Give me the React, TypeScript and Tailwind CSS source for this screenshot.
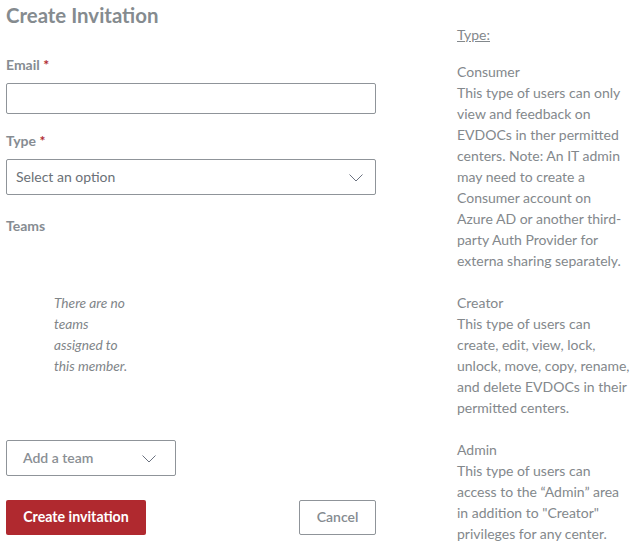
function Chevron({ className }: { className: string }) {
  return (
    <svg className={className} width="14" height="8" viewBox="0 0 14 8" fill="none">
      <path d="M.5 .5l6.5 6.5 6.5-6.5" stroke="#6b7280" strokeWidth="1" />
    </svg>
  )
}

function Label({ text, required = false }: { text: string; required?: boolean }) {
  return (
    <div className="text-[14px] leading-[20px] font-bold text-[#868c92]">
      {text}
      {required && <span className="text-[#b02a30]"> *</span>}
    </div>
  )
}

const typeNotes = [
  {
    name: "Consumer",
    lines: [
      "This type of users can only",
      "view and feedback on",
      "EVDOCs in ther permitted",
      "centers. Note: An IT admin",
      "may need to create a",
      "Consumer account on",
      "Azure AD or another third-",
      "party Auth Provider for",
      "externa sharing separately.",
    ],
  },
  {
    name: "Creator",
    lines: [
      "This type of users can",
      "create, edit, view, lock,",
      "unlock, move, copy, rename,",
      "and delete EVDOCs in their",
      "permitted centers.",
    ],
  },
  {
    name: "Admin",
    lines: [
      "This type of users can",
      "access to the “Admin” area",
      "in addition to \"Creator\"",
      "privileges for any center.",
    ],
  },
]

export default function App() {
  return (
    <div className="flex h-[552px] w-[635px] overflow-hidden bg-white font-['Lato',sans-serif]">
      <div className="ml-[6px] flex w-[370px] flex-col">
        <h1 className="mt-[2px] text-[20.4px] leading-[26px] font-bold text-[#858b8f]">Create Invitation</h1>

        <div className="mt-[27px]">
          <Label text="Email" required />
        </div>
        <input className="mt-[8px] h-[31px] w-full rounded-[2px] border border-[#8f9499] bg-white" />

        <div className="mt-[17px]">
          <Label text="Type" required />
        </div>
        <div className="mt-[8px] flex h-[36px] items-center justify-between rounded-[2px] border border-[#8f9499] pr-[12px] pl-[9px] text-[14px] text-[#6b7177]">
          <span className="-mt-[2px]">Select an option</span>
          <Chevron className="mt-[1px]" />
        </div>

        <div className="mt-[21px]">
          <Label text="Teams" />
        </div>

        <div className="mt-[56px] ml-[48px] w-[84px] text-[13.7px] leading-[21px] text-[#7f8589] italic">
          There are no teams assigned to this member.
        </div>

        <div className="mt-[64px] flex h-[36px] w-[170px] items-center justify-between rounded-[2px] border border-[#8f9499] pr-[19px] pl-[16px] text-[14px] font-semibold text-[#8a8f94]">
          <span className="-mt-[2px]">Add a team</span>
          <Chevron className="mt-[1px]" />
        </div>

        <div className="mt-[24px] flex items-center justify-between">
          <button className="h-[35px] w-[140px] rounded-[2px] bg-[#b0292f] pb-[2px] text-[14.2px] font-bold text-white">
            Create invitation
          </button>
          <button className="h-[35px] w-[77px] rounded-[2px] border border-[#8f9499] pb-[2px] text-[14px] font-semibold text-[#858b90]">
            Cancel
          </button>
        </div>
      </div>

      <div className="ml-[81px] w-[178px] shrink-0 pt-[24px] text-[14px] leading-[21px] whitespace-nowrap text-[#83888c]">
        <div className="underline">Type:</div>
        <div className="mt-[16px] flex flex-col gap-[21px]">
          {typeNotes.map((note) => (
            <div key={note.name}>
              <div>{note.name}</div>
              {note.lines.map((line) => (
                <div key={line}>{line}</div>
              ))}
            </div>
          ))}
        </div>
      </div>
    </div>
  )
}
